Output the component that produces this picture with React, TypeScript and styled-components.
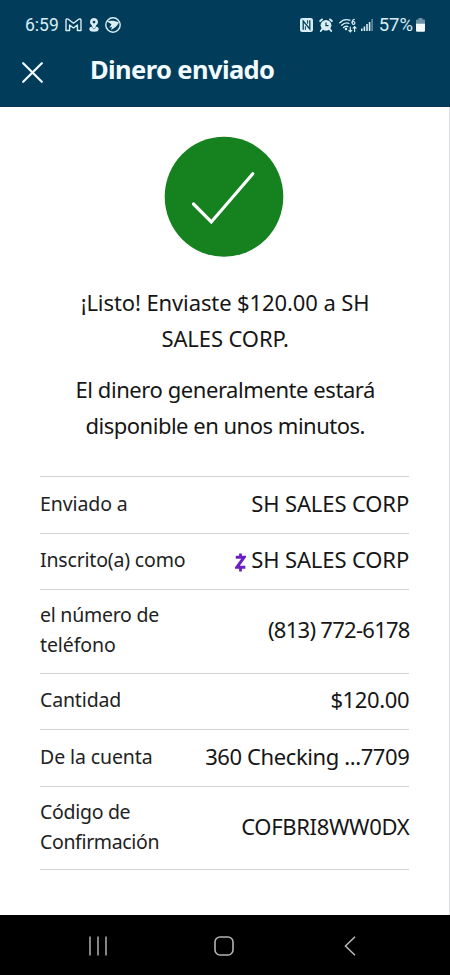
import React from 'react';
import styled, { createGlobalStyle } from 'styled-components';

const GlobalStyle = createGlobalStyle`
  * { box-sizing: border-box; }
  body { margin: 0; background: #fff; }
`;

const Screen = styled.div`
  display: flex;
  flex-direction: column;
  width: 450px;
  height: 975px;
  overflow: hidden;
  background: #fff;
  font-family: 'Noto Sans', 'Open Sans', sans-serif;
  color: #161616;
`;

const Header = styled.header`
  flex: none;
  height: 107px;
  background: #013d5b;
  border-bottom: 1px solid #0b3450;
  color: #f2fbff;
`;

const StatusBar = styled.div`
  display: flex;
  justify-content: space-between;
  height: 48px;
  padding: 2px 25px 0;
`;

const StatusGroup = styled.div`
  display: flex;
  align-items: center;
`;

const StatusText = styled.span<{ $size: number; $gap?: number }>`
  margin-left: ${(p) => p.$gap ?? 0}px;
  font-family: Roboto, 'Noto Sans', sans-serif;
  font-size: ${(p) => p.$size}px;
  line-height: 20px;
  color: #d9edf5;
`;

const StatusIcon = styled.svg<{ $gap?: number }>`
  display: block;
  flex: none;
  margin-left: ${(p) => p.$gap ?? 0}px;
`;

const TitleBar = styled.div`
  display: flex;
  align-items: center;
  height: 44px;
  padding-left: 22px;
`;

const CloseButton = styled.button`
  display: flex;
  width: 21px;
  height: 21px;
  margin: 4px 47px 0 0;
  padding: 0;
  border: 0;
  background: none;
`;

const Title = styled.h1`
  margin: 0 0 2px;
  font-size: 25.5px;
  line-height: 36px;
  font-weight: 700;
  letter-spacing: -0.6px;
`;

const Content = styled.main`
  flex: 1;
  display: flex;
  flex-direction: column;
  align-items: center;
  padding: 29px 40px 0 39px;
  border-right: 1px solid #dcdfe1;
`;

const Badge = styled.svg`
  display: block;
  flex: none;
`;

const Messages = styled.div`
  display: flex;
  flex-direction: column;
  align-items: center;
  gap: 15px;
  margin-top: 27px;
  padding-left: 2px;
`;

const Message = styled.p`
  display: flex;
  flex-direction: column;
  align-items: center;
  margin: 0;
  font-size: 22px;
  line-height: 36px;
`;

const Fitted = styled.span<{ $track?: number }>`
  display: block;
  white-space: nowrap;
  letter-spacing: ${(p) => p.$track ?? 0}px;
  margin-right: ${(p) => p.$track ?? 0}px;
`;

const Details = styled.dl`
  align-self: stretch;
  margin: 33px 0 0 1px;
  border-top: 1px solid #d2d2d2;
`;

const DetailRow = styled.div<{ $tall?: boolean }>`
  display: flex;
  justify-content: space-between;
  align-items: center;
  height: ${(p) => (p.$tall ? 83.5 : 56.5)}px;
  padding-bottom: 4px;
  border-bottom: 1px solid #d2d2d2;
`;

const Label = styled.dt`
  margin-top: 2px;
  font-size: 19.5px;
  line-height: 30px;
  color: #222;
`;

const Value = styled.dd`
  display: flex;
  align-items: center;
  gap: 5px;
  margin: 0;
  font-size: 22px;
  line-height: 30px;
`;

const ZelleMark = styled.svg`
  display: block;
  margin-top: 6px;
`;

const NavBar = styled.nav`
  flex: none;
  display: flex;
  align-items: center;
  justify-content: space-between;
  height: 60px;
  padding: 2px 88px 0 86px;
  background: #000;
`;

const NavButton = styled.button`
  display: flex;
  justify-content: center;
  width: 24px;
  padding: 0;
  border: 0;
  background: none;
`;

type Line = { text: string; track?: number };
type Detail = { label: Line[]; value: Line; zelle?: boolean };

const messages: Line[][] = [
  [{ text: '¡Listo! Enviaste $120.00 a SH', track: -0.1 }, { text: 'SALES CORP.', track: -0.1 }],
  [
    { text: 'El dinero generalmente estará', track: -0.43 },
    { text: 'disponible en unos minutos.', track: -0.49 },
  ],
];

const details: Detail[] = [
  { label: [{ text: 'Enviado a', track: -0.1 }], value: { text: 'SH SALES CORP', track: -0.12 } },
  {
    label: [{ text: 'Inscrito(a) como', track: -0.18 }],
    value: { text: 'SH SALES CORP', track: -0.12 },
    zelle: true,
  },
  {
    label: [{ text: 'el número de', track: -0.25 }, { text: 'teléfono', track: -0.1 }],
    value: { text: '(813) 772-6178', track: -0.72 },
  },
  { label: [{ text: 'Cantidad', track: -0.15 }], value: { text: '$120.00', track: -0.35 } },
  {
    label: [{ text: 'De la cuenta', track: -0.1 }],
    value: { text: '360 Checking ...7709', track: -0.4 },
  },
  {
    label: [{ text: 'Código de', track: -0.3 }, { text: 'Confirmación', track: -0.35 }],
    value: { text: 'COFBRI8WW0DX', track: -0.33 },
  },
];

const ink = '#d9edf5';

function Notifications() {
  return (
    <StatusGroup>
      <StatusText $size={17.5}>6:59</StatusText>
      <StatusIcon $gap={6} width="17" height="14" viewBox="0 0 17 14" fill="none" stroke={ink} strokeWidth="1.4" strokeLinejoin="round">
        <path d="M1 12.500V2.200C1 .9 2.400.6 3.300 1.300L8.500 5.300l5.200-4C14.600.6 16 .9 16 2.200v10.300h-3.600V7L8.500 10 4.600 7v5.500z" />
      </StatusIcon>
      <StatusIcon $gap={7} width="10" height="14" viewBox="0 0 10 14">
        <path fill={ink} fillRule="evenodd" d="M5 0a4 4 0 0 1 2.200 7.300L6.200 10H3.800L2.800 7.300A4 4 0 0 1 5 0zm0 2.700a1.400 1.400 0 1 0 0 2.800 1.400 1.400 0 0 0 0-2.800z" />
        <path fill={ink} d="M2.800 8.800C.9 9.100.3 10 .3 11.200.3 12.900 2.200 13.700 5 13.700s4.700-.8 4.700-2.500c0-1.200-.6-2.100-2.500-2.400L6 10.600H4z" />
      </StatusIcon>
      <StatusIcon $gap={6} width="16" height="16" viewBox="0 0 16 16">
        <circle cx="8" cy="8" r="7.200" fill="none" stroke={ink} strokeWidth="1.400" />
        <path fill={ink} d="M1.500 4.500C5.500 3.300 10.500 3.800 14 5.600 12.400 8.800 9.300 11.600 6 13L7 9.900 4.200 10.400 6.500 7.500C5 6.200 3.300 5.100 1.500 4.500z" />
      </StatusIcon>
    </StatusGroup>
  );
}

function DeviceStatus() {
  return (
    <StatusGroup>
      <StatusIcon width="13" height="14" viewBox="0 0 13 14">
        <rect width="13" height="14" rx="2.200" fill={ink} />
        <path d="M3.200 11.800V3l6.600 8V2.200" fill="none" stroke="#013d5b" strokeWidth="1.300" />
        <path d="M5.400 11.800V8.300M7.600 5.700V2.200" fill="none" stroke="#013d5b" />
      </StatusIcon>
      <StatusIcon $gap={6} width="14" height="14" viewBox="0 0 14 14">
        <circle cx="7" cy="7.300" r="5.400" fill={ink} />
        <path d="M1.200 3 3 1.400M12.800 3 11 1.400M3.300 11 1.800 13M10.700 11l1.500 2" stroke={ink} strokeWidth="1.900" strokeLinecap="round" />
        <path d="M7 4.500v3.200h2.500" fill="none" stroke="#013d5b" strokeWidth="1.200" />
      </StatusIcon>
      <StatusIcon $gap={6} width="18" height="15" viewBox="0 0 18 15" fill="none" stroke={ink} strokeWidth="1.400" strokeLinecap="round">
        <path d="M.8 4.800C3.600 1.800 7.400 1 10.800 2.200M2.700 7.300C4.900 5 7.500 4.500 9.800 5.300M4.600 9.600C5.900 8.300 7.400 8 8.800 8.600" />
        <circle cx="7" cy="11" r=".6" fill={ink} />
        <path strokeWidth="1.200" d="M15.300 1.300c-1.500.2-2.200 1.600-2.200 3.300" />
        <circle cx="14.500" cy="4.900" r="1.400" strokeWidth="1.200" />
        <path strokeWidth="1.200" d="M11.300 9v4.800M9.800 12.300l1.500 1.500 1.500-1.500M15.600 13.500V8.700M14.100 10.200l1.500-1.500 1.500 1.500" />
      </StatusIcon>
      <StatusIcon $gap={4} width="12" height="12" viewBox="0 0 12 12">
        <path fill={ink} d="M0 9.500h1.600V12H0zM2.600 7.500h1.600V12H2.600zM5.200 5h1.600v7H5.200zM7.800 3h1.600v9H7.800z" />
        <path fill="#668ca0" d="M10.300 0h1.600v12h-1.600z" />
      </StatusIcon>
      <StatusText $size={18.5} $gap={6}>57%</StatusText>
      <StatusIcon $gap={3} width="9" height="14" viewBox="0 0 9 14">
        <path fill="#6e93a5" d="M2.500 0h4v1.500H8q1 0 1 1V6H0V2.500q0-1 1-1h1.500z" />
        <path fill="#f4fbff" d="M0 5.800h9v6.700q0 1.300-1.300 1.300H1.300Q0 13.800 0 12.500z" />
      </StatusIcon>
    </StatusGroup>
  );
}

function Lines({ lines }: { lines: Line[] }) {
  return (
    <>
      {lines.map((line) => (
        <Fitted key={line.text} $track={line.track}>
          {line.text}
        </Fitted>
      ))}
    </>
  );
}

export default function App() {
  return (
    <>
      <GlobalStyle />
      <Screen>
        <Header>
          <StatusBar>
            <Notifications />
            <DeviceStatus />
          </StatusBar>
          <TitleBar>
            <CloseButton aria-label="Cerrar">
              <svg width="21" height="21" viewBox="0 0 21 21" stroke="#f2fbff" strokeWidth="2.200" strokeLinecap="round">
                <path d="M1.200 1.200l18.600 18.600M19.800 1.200L1.200 19.800" />
              </svg>
            </CloseButton>
            <Title>Dinero enviado</Title>
          </TitleBar>
        </Header>
        <Content>
          <Badge width="120" height="121" viewBox="0 0 120 121">
            <ellipse cx="60" cy="60.700" rx="59.300" ry="60" fill="#15811f" />
            <path d="M29.500 68 47.300 86 88.800 37.700" fill="none" stroke="#fff" strokeWidth="3.200" strokeLinecap="round" strokeLinejoin="miter" />
          </Badge>
          <Messages>
            {messages.map((lines) => (
              <Message key={lines[0].text}>
                <Lines lines={lines} />
              </Message>
            ))}
          </Messages>
          <Details>
            {details.map((detail) => (
              <DetailRow key={detail.label[0].text} $tall={detail.label.length > 1}>
                <Label>
                  <Lines lines={detail.label} />
                </Label>
                <Value>
                  {detail.zelle && (
                    <ZelleMark width="11" height="19" viewBox="0 0 11 19" fill="none" stroke="#6b1fc4">
                      <path d="M.8 4.200h8.400L1.800 14.300h8.600" strokeWidth="3" />
                      <path d="M5.500.5v3.500M5.500 14.500v4" strokeWidth="2.800" />
                    </ZelleMark>
                  )}
                  <Lines lines={[detail.value]} />
                </Value>
              </DetailRow>
            ))}
          </Details>
        </Content>
        <NavBar>
          <NavButton aria-label="Recientes">
            <svg width="20" height="20" viewBox="0 0 20 20" stroke="#a6a6a6" strokeWidth="1.600">
              <path d="M2 .5v19M10 .5v19M18 .5v19" />
            </svg>
          </NavButton>
          <NavButton aria-label="Inicio">
            <svg width="20" height="20" viewBox="0 0 20 20" fill="none" stroke="#b4b4b4" strokeWidth="1.600">
              <rect x="1" y="1" width="18" height="18" rx="5" />
            </svg>
          </NavButton>
          <NavButton aria-label="Atrás">
            <svg width="12" height="20" viewBox="0 0 12 20" fill="none" stroke="#b4b4b4" strokeWidth="1.600">
              <path d="M11 .8 1.500 10 11 19.200" />
            </svg>
          </NavButton>
        </NavBar>
      </Screen>
    </>
  );
}
